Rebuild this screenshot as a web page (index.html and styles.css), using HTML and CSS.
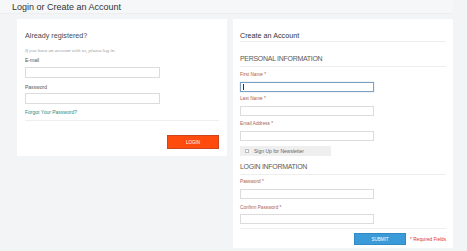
FILE: index.html
```html
<!DOCTYPE html>
<html lang="en">
<head>
    <meta charset="UTF-8" />
    <title>Login or Create an Account</title>
<link rel="stylesheet" href="styles.css">
</head>
<body>
    <div class="page">
        <h1 class="page-title">Login or Create an Account</h1>
        <div class="columns">
            <form class="box login">
                <h2 class="box-title">Already registered?</h2>
                <p class="note">If you have an account with us, please log in.</p>
                <div class="field first">
                    <label>E-mail</label>
                    <input type="text">
                </div>
                <div class="field second">
                    <label>Password</label>
                    <input type="password">
                </div>
                <a class="forgot" href="#">Forgot Your Password?</a>
                <div class="actions">
                    <button type="button" class="btn btn-login">Login</button>
                </div>
            </form>
            <form class="box register">
                <h2 class="box-title">Create an Account</h2>
                <h3 class="section">Personal Information</h3>
                <div class="field f1">
                    <label>First Name *</label>
                    <div class="input-wrap">
                        <input type="text" class="focused">
                        <span class="caret"></span>
                    </div>
                </div>
                <div class="field f2">
                    <label>Last Name *</label>
                    <input type="text">
                </div>
                <div class="field f3">
                    <label>Email Address *</label>
                    <input type="text">
                </div>
                <div class="newsletter">
                    <span class="check"></span>
                    <span>Sign Up for Newsletter</span>
                </div>
                <h3 class="section section2">Login Information</h3>
                <div class="field f4">
                    <label>Password *</label>
                    <input type="password">
                </div>
                <div class="field f5">
                    <label>Confirm Password *</label>
                    <input type="password">
                </div>
                <div class="actions">
                    <button type="button" class="btn btn-submit">Submit</button>
                    <span class="required">* Required Fields</span>
                </div>
            </form>
        </div>
    </div>
</body>
</html>
```

FILE: styles.css
```css
* {margin: 0; padding: 0; box-sizing: border-box;}
body {
    background: #f3f4f6;
    font-family: "Liberation Sans", Arial, sans-serif;
    color: #555;
}
.page {width: 453px;}
.page-title {
    height: 14px;
    padding: 2px 0 0 12px;
    font-size: 9px;
    line-height: 11px;
    font-weight: normal;
    color: #333;
    background: #f6f7f8;
    border-bottom: 1px solid #eceef0;
}
.columns {
    display: flex;
    align-items: flex-start;
    gap: 6px;
    margin: 5px 0 0 17px;
}
.box {background: #fff;}
.login {width: 210px; padding: 12px 8px 7px;}
.register {width: 220px; padding: 12px 7px 3px;}
.box-title {
    font-size: 7.2px;
    line-height: 10px;
    font-weight: normal;
    color: #4a4a4a;
}
.register .box-title {
    color: #333;
    border-bottom: 1px solid #eee;
}
.note {
    margin-top: 6px;
    font: italic 5px/8px "Liberation Serif", serif;
    color: #999;
}
.field label {
    display: block;
    font-size: 5px;
    line-height: 8px;
    color: #555;
}
.field input {
    display: block;
    width: 135px;
    height: 11px;
    margin-top: 3px;
    border: 1px solid #dcdcdc;
    background: #fff;
    outline: none;
}
.login .first {margin-top: 1px;}
.login .second {margin-top: 5px;}
.login .second input {margin-top: 2px;}
.forgot {
    display: block;
    margin-top: 4px;
    font-size: 5px;
    line-height: 8px;
    color: #2e8b7e;
    text-decoration: none;
}
.actions {
    display: flex;
    justify-content: flex-end;
    align-items: center;
    border-top: 1px solid #eee;
}
.login .actions {margin-top: 4px; padding: 14px 0 0;}
.btn {
    width: 52px;
    height: 14px;
    font-family: "Liberation Sans", Arial, sans-serif;
    font-size: 4.5px;
    text-transform: uppercase;
    color: #fff;
    border: 1px solid;
    cursor: pointer;
}
.btn-login {background: #ff4b0e; border-color: #c9461f;}
.btn-submit {height: 12px; background: #3b9bd8; border-color: #318ac4;}
.section {
    margin-top: 12px;
    padding-bottom: 2px;
    font-size: 7px;
    line-height: 10px;
    font-weight: normal;
    letter-spacing: -0.3px;
    text-transform: uppercase;
    color: #5a5a5a;
    border-bottom: 1px solid #eee;
}
.section2 {margin-top: 6px;}
.register .field label {font-size: 4.7px; color: #a9634f;}
.register .field input {width: 134px; height: 10px;}
.register .f1 {margin-top: 4px;}
.register .f2 {margin-top: 3px;}
.register .f3 {margin-top: 4px;}
.register .f4 {margin-top: 3px;}
.register .f5 {margin-top: 5px;}
.register .f5 input {margin-top: 2px;}
.input-wrap {position: relative;}
.register .field input.focused {
    border-color: #7f9fc0;
    box-shadow: 0 0 1px #9dbbd6;
}
.caret {
    position: absolute;
    left: 3px;
    top: 2px;
    width: 1px;
    height: 6px;
    background: #333;
}
.newsletter {
    display: flex;
    align-items: center;
    gap: 5px;
    width: 91px;
    height: 10px;
    margin-top: 5px;
    padding-left: 5px;
    background: #efefef;
    font-size: 5px;
    color: #666;
}
.check {
    width: 4px;
    height: 4px;
    border: 1px solid #bbb;
    background: #fff;
}
.register .actions {margin-top: 4px; padding: 4px 0 0; gap: 4px;}
.required {font-size: 4.7px; color: #d33;}
```
